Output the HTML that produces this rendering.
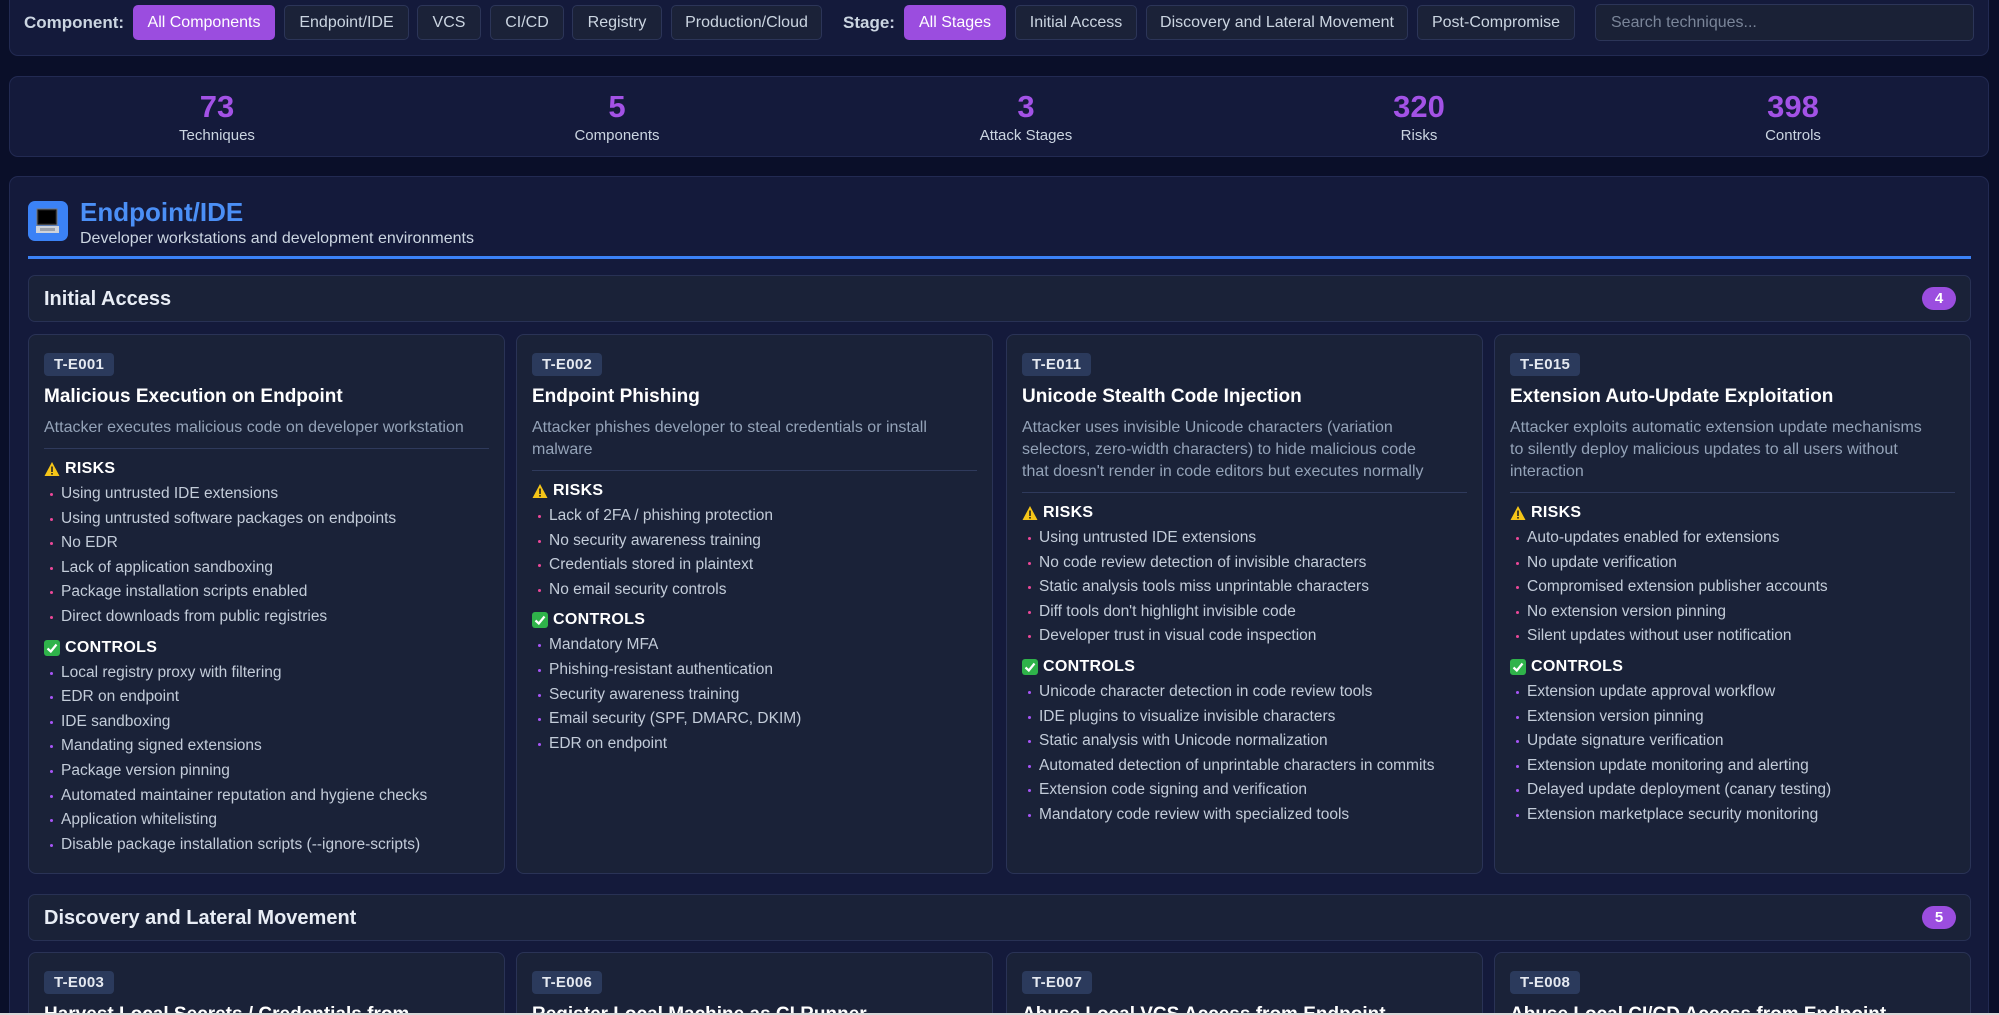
<!DOCTYPE html>
<html><head><meta charset="utf-8">
<style>
*{box-sizing:border-box;margin:0;padding:0}
html,body{width:1999px;height:1015px;overflow:hidden;background:#0a0f29;font-family:"Liberation Sans",Arial,sans-serif;color:#e2e8f0}
#wrap{position:relative;width:1999px;height:1015px;overflow:hidden}
.abs{position:absolute}
.panel{position:absolute;left:9px;width:1980px;background:#141a3b;border:1px solid #222a52;border-radius:9px}
.btn{position:absolute;top:5px;height:35px;border:1px solid #2c3558;background:#1b2238;border-radius:5px;color:#cbd5e1;font-size:16px;line-height:33px;text-align:center;white-space:nowrap}
.btn.on{background:#9b4ddf;border-color:#9b4ddf;color:#fff}
.lbl{position:absolute;top:5px;line-height:35px;font-size:17px;font-weight:bold;color:#cbd5e1}
.stat{position:absolute;top:89px;text-align:center;width:200px}
.stat b{display:block;font-size:31px;color:#a352e6;line-height:36px}
.stat span{display:block;font-size:15px;color:#cbd5e1;line-height:20px;margin-top:1px}
.stage{position:absolute;left:28px;width:1943px;height:47px;background:#1a2238;border:1px solid #283154;border-radius:7px}
.stage .t{position:absolute;left:15px;top:1px;line-height:45px;font-size:20px;font-weight:bold;color:#e8edf5}
.badge{position:absolute;right:14px;top:11px;width:34px;height:23px;border-radius:12px;background:#9b4ddf;color:#fff;font-size:15px;font-weight:bold;text-align:center;line-height:23px}
.card{position:absolute;width:477px;background:#1a2238;border:1px solid #2a3356;border-radius:8px;padding:18px 15px 0 15px;overflow:hidden}
.tag{display:inline-block;height:23px;line-height:23px;padding:0 10px;background:#2b3a5c;border-radius:4px;font-size:15px;font-weight:bold;color:#e5e9f0;letter-spacing:.3px}
.ti{margin-top:9px;font-size:19px;line-height:24px;font-weight:bold;color:#fff;white-space:nowrap}
.de{margin-top:8px;font-size:16px;line-height:22px;color:#94a3b8;padding-bottom:9px;border-bottom:1px solid #2f3a5c;white-space:nowrap}
.h{margin-top:10px;font-size:16px;line-height:20px;font-weight:bold;color:#fff;display:flex;align-items:center;letter-spacing:.3px}
.h svg{margin-right:5px}
.h.c{margin-top:8px}
ul{list-style:none;margin-top:3px}
li{position:relative;padding-left:17px;font-size:15.5px;line-height:24.6px;color:#c3ccd9;white-space:nowrap}
li:before{content:"";position:absolute;left:6px;top:11px;width:3px;height:3px;border-radius:50%;background:#ec4899}
ul.k li:before{background:#a855f7}
</style></head><body><div id="wrap">

<div class="panel" style="top:-10px;height:66px"></div>
<div class="lbl" style="left:24px">Component:</div>
<div class="btn on" style="left:133px;width:142px">All Components</div>
<div class="btn" style="left:284px;width:125px">Endpoint/IDE</div>
<div class="btn" style="left:417px;width:64px">VCS</div>
<div class="btn" style="left:490px;width:74px">CI/CD</div>
<div class="btn" style="left:572px;width:90px">Registry</div>
<div class="btn" style="left:671px;width:151px">Production/Cloud</div>
<div class="lbl" style="left:843px">Stage:</div>
<div class="btn on" style="left:904px;width:102px">All Stages</div>
<div class="btn" style="left:1015px;width:122px">Initial Access</div>
<div class="btn" style="left:1146px;width:262px">Discovery and Lateral Movement</div>
<div class="btn" style="left:1417px;width:158px">Post-Compromise</div>
<div class="btn" style="left:1595px;width:379px;top:4px;height:37px;line-height:35px;text-align:left;padding-left:15px;color:#7a8599;background:#1a2136">Search techniques...</div>

<div class="panel" style="top:76px;height:81px"></div>
<div class="stat" style="left:117px"><b>73</b><span>Techniques</span></div>
<div class="stat" style="left:517px"><b>5</b><span>Components</span></div>
<div class="stat" style="left:926px"><b>3</b><span>Attack Stages</span></div>
<div class="stat" style="left:1319px"><b>320</b><span>Risks</span></div>
<div class="stat" style="left:1693px"><b>398</b><span>Controls</span></div>

<div class="panel" style="top:176px;height:900px"></div>
<div class="abs" style="left:28px;top:201px;width:40px;height:40px;border-radius:7px;background:#3b82f6">
<svg width="40" height="40" viewBox="0 0 40 40"><rect x="9" y="8" width="20" height="16" fill="#111" stroke="#777" stroke-width="1"/><rect x="11" y="10" width="16" height="12" fill="#000"/><rect x="8" y="25" width="23" height="7" fill="#cfd3da"/><rect x="12" y="27" width="15" height="3" fill="#9aa0aa"/></svg></div>
<div class="abs" style="left:80px;top:196px;font-size:26px;font-weight:bold;color:#4b8ff6;line-height:32px">Endpoint/IDE</div>
<div class="abs" style="left:80px;top:229px;font-size:16px;color:#cbd5e1;line-height:20px">Developer workstations and development environments</div>
<div class="abs" style="left:28px;top:256px;width:1943px;height:3px;background:#3b82f6"></div>

<div class="stage" style="top:275px"><div class="t">Initial Access</div><div class="badge">4</div></div>

<svg width="0" height="0" style="position:absolute"><defs>
<symbol id="w" viewBox="0 0 16 16"><path d="M8 1 L15.5 15 H0.5 Z" fill="#f5c518"/><rect x="7.2" y="5.5" width="1.6" height="5.5" fill="#222"/><rect x="7.2" y="12" width="1.6" height="1.6" fill="#222"/></symbol>
<symbol id="ck" viewBox="0 0 16 16"><rect x="0" y="0" width="16" height="16" rx="3" fill="#2fb34a"/><path d="M3.5 8.5 L6.8 11.5 L12.5 4.5" stroke="#fff" stroke-width="2.2" fill="none"/></symbol>
</defs></svg>

<div class="card" style="left:28px;top:334px;height:540px">
<div class="tag">T-E001</div>
<div class="ti">Malicious Execution on Endpoint</div>
<div class="de">Attacker executes malicious code on developer workstation</div>
<div class="h"><svg width="16" height="16"><use href="#w"/></svg>RISKS</div>
<ul><li>Using untrusted IDE extensions</li><li>Using untrusted software packages on endpoints</li><li>No EDR</li><li>Lack of application sandboxing</li><li>Package installation scripts enabled</li><li>Direct downloads from public registries</li></ul>
<div class="h c"><svg width="16" height="16"><use href="#ck"/></svg>CONTROLS</div>
<ul class="k"><li>Local registry proxy with filtering</li><li>EDR on endpoint</li><li>IDE sandboxing</li><li>Mandating signed extensions</li><li>Package version pinning</li><li>Automated maintainer reputation and hygiene checks</li><li>Application whitelisting</li><li>Disable package installation scripts (--ignore-scripts)</li></ul>
</div>

<div class="card" style="left:516px;top:334px;height:540px">
<div class="tag">T-E002</div>
<div class="ti">Endpoint Phishing</div>
<div class="de">Attacker phishes developer to steal credentials or install<br>malware</div>
<div class="h"><svg width="16" height="16"><use href="#w"/></svg>RISKS</div>
<ul><li>Lack of 2FA / phishing protection</li><li>No security awareness training</li><li>Credentials stored in plaintext</li><li>No email security controls</li></ul>
<div class="h c"><svg width="16" height="16"><use href="#ck"/></svg>CONTROLS</div>
<ul class="k"><li>Mandatory MFA</li><li>Phishing-resistant authentication</li><li>Security awareness training</li><li>Email security (SPF, DMARC, DKIM)</li><li>EDR on endpoint</li></ul>
</div>

<div class="card" style="left:1006px;top:334px;height:540px">
<div class="tag">T-E011</div>
<div class="ti">Unicode Stealth Code Injection</div>
<div class="de">Attacker uses invisible Unicode characters (variation<br>selectors, zero-width characters) to hide malicious code<br>that doesn't render in code editors but executes normally</div>
<div class="h"><svg width="16" height="16"><use href="#w"/></svg>RISKS</div>
<ul><li>Using untrusted IDE extensions</li><li>No code review detection of invisible characters</li><li>Static analysis tools miss unprintable characters</li><li>Diff tools don't highlight invisible code</li><li>Developer trust in visual code inspection</li></ul>
<div class="h c"><svg width="16" height="16"><use href="#ck"/></svg>CONTROLS</div>
<ul class="k"><li>Unicode character detection in code review tools</li><li>IDE plugins to visualize invisible characters</li><li>Static analysis with Unicode normalization</li><li>Automated detection of unprintable characters in commits</li><li>Extension code signing and verification</li><li>Mandatory code review with specialized tools</li></ul>
</div>

<div class="card" style="left:1494px;top:334px;height:540px">
<div class="tag">T-E015</div>
<div class="ti">Extension Auto-Update Exploitation</div>
<div class="de">Attacker exploits automatic extension update mechanisms<br>to silently deploy malicious updates to all users without<br>interaction</div>
<div class="h"><svg width="16" height="16"><use href="#w"/></svg>RISKS</div>
<ul><li>Auto-updates enabled for extensions</li><li>No update verification</li><li>Compromised extension publisher accounts</li><li>No extension version pinning</li><li>Silent updates without user notification</li></ul>
<div class="h c"><svg width="16" height="16"><use href="#ck"/></svg>CONTROLS</div>
<ul class="k"><li>Extension update approval workflow</li><li>Extension version pinning</li><li>Update signature verification</li><li>Extension update monitoring and alerting</li><li>Delayed update deployment (canary testing)</li><li>Extension marketplace security monitoring</li></ul>
</div>

<div class="stage" style="top:894px"><div class="t">Discovery and Lateral Movement</div><div class="badge">5</div></div>

<div class="card" style="left:28px;top:952px;height:200px"><div class="tag">T-E003</div><div class="ti">Harvest Local Secrets / Credentials from</div></div>
<div class="card" style="left:516px;top:952px;height:200px"><div class="tag">T-E006</div><div class="ti">Register Local Machine as CI Runner</div></div>
<div class="card" style="left:1006px;top:952px;height:200px"><div class="tag">T-E007</div><div class="ti">Abuse Local VCS Access from Endpoint</div></div>
<div class="card" style="left:1494px;top:952px;height:200px"><div class="tag">T-E008</div><div class="ti">Abuse Local CI/CD Access from Endpoint</div></div>

<div class="abs" style="left:0;top:1013px;width:1999px;height:2px;background:#d8d8d8"></div>
</div></body></html>
